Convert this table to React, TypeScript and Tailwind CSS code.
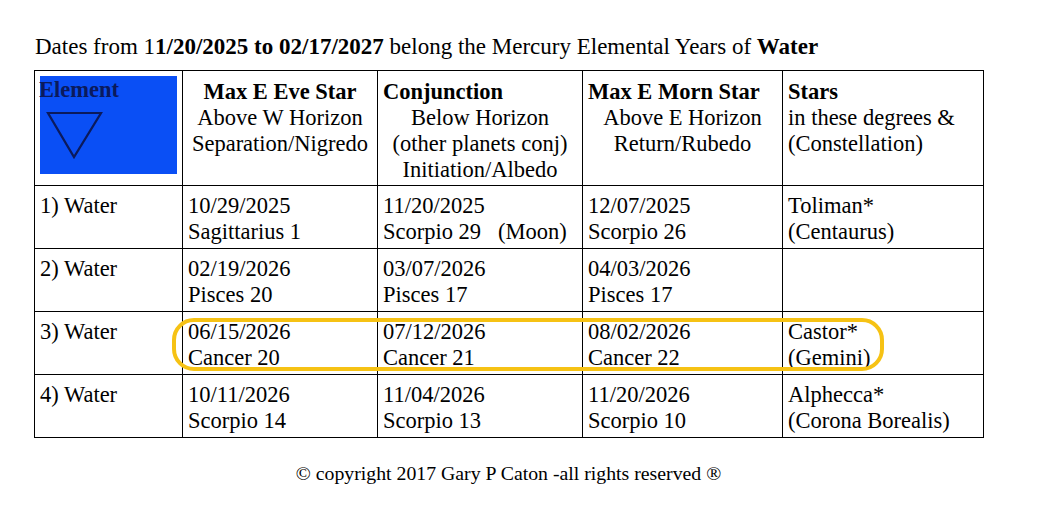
import React from 'react';

type Row = {
  element: string;
  eve: [string, string];
  conj: [string, string];
  morn: [string, string];
  stars: [string, string];
};

const rows: Row[] = [
  { element: '1) Water', eve: ['10/29/2025', 'Sagittarius 1'], conj: ['11/20/2025', 'Scorpio 29\u00a0\u00a0\u00a0(Moon)'], morn: ['12/07/2025', 'Scorpio 26'], stars: ['Toliman*', '(Centaurus)'] },
  { element: '2) Water', eve: ['02/19/2026', 'Pisces 20'], conj: ['03/07/2026', 'Pisces 17'], morn: ['04/03/2026', 'Pisces 17'], stars: ['', ''] },
  { element: '3) Water', eve: ['06/15/2026', 'Cancer 20'], conj: ['07/12/2026', 'Cancer 21'], morn: ['08/02/2026', 'Cancer 22'], stars: ['Castor*', '(Gemini)'] },
  { element: '4) Water', eve: ['10/11/2026', 'Scorpio 14'], conj: ['11/04/2026', 'Scorpio 13'], morn: ['11/20/2026', 'Scorpio 10'], stars: ['Alphecca*', '(Corona Borealis)'] },
];

const Cell: React.FC<{ lines: [string, string] }> = ({ lines }) => (
  <td className="border border-black align-top px-[5px] pt-[7px] h-[63px]">
    <div>{lines[0] || '\u00a0'}</div>
    <div>{lines[1] || '\u00a0'}</div>
  </td>
);

export default function App() {
  return (
    <div className="relative w-full h-[525px] bg-white text-black font-['Liberation_Serif','Times_New_Roman',serif]">
      <div className="pt-[34px] pl-[35px] text-[23px] leading-[26px]">
        Dates from 1<b>1/20/2025 to 02/17/2027</b> belong the Mercury Elemental Years of <b>Water</b>
      </div>

      <table className="ml-[34px] mt-[10px] border-collapse border border-black text-[22.5px] leading-[26px] table-fixed w-[949px]">
        <colgroup>
          <col className="w-[148px]" />
          <col className="w-[195px]" />
          <col className="w-[205px]" />
          <col className="w-[200px]" />
          <col className="w-[201px]" />
        </colgroup>
        <thead>
          <tr className="h-[115px]">
            <th className="border border-black align-top p-[5px] font-normal text-left">
              <div className="w-[137px] h-[98px] bg-[#0a4ff5] relative">
                <div className="font-bold text-[#0b1a5c] leading-[28px] -ml-[1px]">Element</div>
                <svg className="absolute left-[6px] top-[35px]" width="58" height="50" viewBox="0 0 58 50">
                  <polygon points="2,2 55,2 28,46" fill="none" stroke="#0b1a5c" strokeWidth="2.2" strokeLinejoin="miter" />
                </svg>
              </div>
            </th>
            <th className="border border-black align-top px-[5px] pt-[8px] font-normal text-center">
              <div className="font-bold">Max E Eve Star</div>
              <div>Above W Horizon</div>
              <div>Separation/Nigredo</div>
            </th>
            <th className="border border-black align-top px-[5px] pt-[8px] font-normal text-center">
              <div className="font-bold text-left">Conjunction</div>
              <div>Below Horizon</div>
              <div>(other planets conj)</div>
              <div>Initiation/Albedo</div>
            </th>
            <th className="border border-black align-top px-[5px] pt-[8px] font-normal text-center">
              <div className="font-bold text-left">Max E Morn Star</div>
              <div>Above E Horizon</div>
              <div>Return/Rubedo</div>
            </th>
            <th className="border border-black align-top px-[5px] pt-[8px] font-normal text-left">
              <div className="font-bold">Stars</div>
              <div>in these degrees &amp;</div>
              <div>(Constellation)</div>
            </th>
          </tr>
        </thead>
        <tbody>
          {rows.map((r) => (
            <tr key={r.element}>
              <td className="border border-black align-top px-[5px] pt-[7px] h-[63px]">{r.element}</td>
              <Cell lines={r.eve} />
              <Cell lines={r.conj} />
              <Cell lines={r.morn} />
              <Cell lines={r.stars} />
            </tr>
          ))}
        </tbody>
      </table>

      <div className="mt-[23px] ml-[34px] w-[949px] text-center text-[19.8px] leading-[24px]">
        © copyright 2017 Gary P Caton -all rights reserved ®
      </div>

      <div className="absolute left-[172px] top-[318px] w-[712px] h-[53px] border-4 border-[#f6c214] rounded-[22px] pointer-events-none" />
    </div>
  );
}
